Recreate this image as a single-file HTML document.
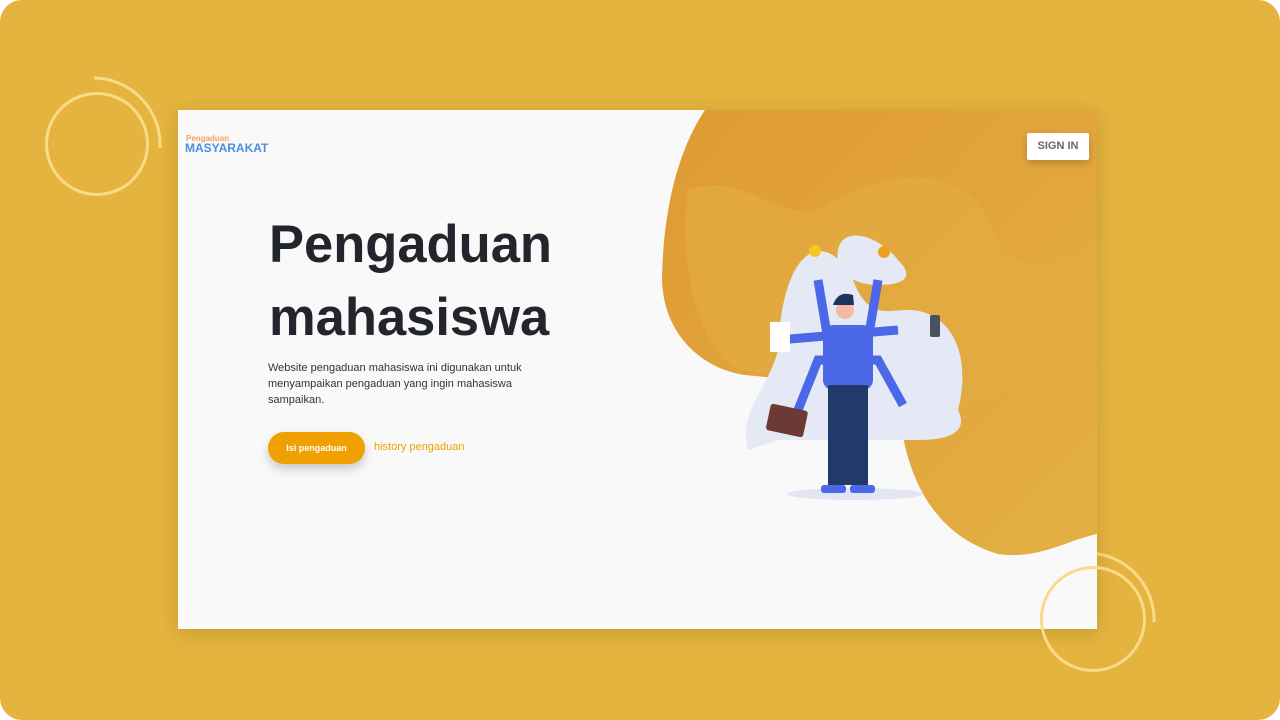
<!DOCTYPE html>
<html><head><style>
html,body{margin:0;background:#fff}
body{width:1280px;height:720px;overflow:hidden;font-family:"Liberation Sans",sans-serif;position:relative}
.bg{position:absolute;left:0;top:0;width:1280px;height:720px;background:#e5b43e;border-radius:22px}
.card{position:absolute;left:178px;top:110px;width:919px;height:519px;background:#f9f9f9;box-shadow:0 4px 18px rgba(0,0,0,.15);overflow:hidden}
.ring{position:absolute;border-radius:50%;border:3px solid #f9d98a}
</style></head><body>
<div class="bg"></div>
<div class="ring" style="left:45px;top:92px;width:98px;height:98px"></div>
<svg style="position:absolute;left:0;top:0" width="1280" height="720"><path d="M94 78 A67 67 0 0 1 160 148" fill="none" stroke="#f9d98a" stroke-width="3"/><path d="M1087 553 A67 67 0 0 1 1154 622" fill="none" stroke="#f9d98a" stroke-width="3"/></svg>
<div class="card">
<svg style="position:absolute;left:0;top:0" width="919" height="519">
<defs><linearGradient id="g" x1="0" y1="0" x2="1" y2="1"><stop offset="0" stop-color="#e09a33"/><stop offset="1" stop-color="#e3b043"/></linearGradient></defs>
<path d="M527 0 C500 40 485 100 484 170 C486 230 530 260 567 265 L720 280 C722 340 740 420 820 444 C860 450 890 430 919 424 L919 0 Z" fill="url(#g)"/>
<path d="M510 80 C560 60 600 110 640 100 C700 60 780 50 810 110 C830 170 870 160 919 130 L919 250 C850 270 800 300 760 290 L560 260 C520 240 500 150 510 80Z" fill="#e3ae45" opacity=".6"/>
<path d="M570 340 C560 300 590 280 600 240 C605 130 650 120 675 170 C690 210 710 200 730 200 C770 200 795 240 780 300 C790 320 775 330 740 330 L600 330 Z" fill="#e4e9f5"/>
<path d="M660 140 C665 115 700 125 720 150 C740 170 720 175 700 175 C680 175 655 165 660 140Z" fill="#e4e9f5"/>
<ellipse cx="677" cy="384" rx="68" ry="6" fill="#e2e6f2"/>
<circle cx="637" cy="141" r="6" fill="#f5c722"/><circle cx="706" cy="142" r="6" fill="#f0a020"/>
<path d="M640 170 L650 230 L690 230 L700 170" stroke="#4a68e8" stroke-width="9" fill="none"/>
<path d="M600 230 L720 220 M620 300 L640 250 L700 250 L725 295" stroke="#4a68e8" stroke-width="9" fill="none"/>
<rect x="645" y="215" width="50" height="65" rx="10" fill="#4a68e8"/>
<rect x="650" y="275" width="40" height="100" fill="#213a6a"/>
<circle cx="667" cy="200" r="9" fill="#f7b8a0"/><path d="M655 195 Q660 180 675 185 L676 195Z" fill="#1e3460"/>
<rect x="590" y="297" width="38" height="27" rx="3" fill="#6b3a35" transform="rotate(12 609 310)"/>
<rect x="752" y="205" width="10" height="22" rx="2" fill="#4a5060"/>
<rect x="592" y="212" width="20" height="30" fill="#fff"/>
<rect x="643" y="375" width="25" height="8" rx="3" fill="#4a68e8"/><rect x="672" y="375" width="25" height="8" rx="3" fill="#4a68e8"/>
</svg>
<div style="position:absolute;left:8px;top:24px;font-size:8px;font-weight:bold;color:#f5a35a">Pengaduan</div>
<div style="position:absolute;left:7px;top:31px;font-size:12px;font-weight:bold;color:#4a8fe0">MASYARAKAT</div>
<div style="position:absolute;left:849px;top:23px;width:62px;height:27px;background:#fff;box-shadow:0 3px 8px rgba(0,0,0,.2);border-radius:2px;font-size:11px;font-weight:bold;color:#666;text-align:center;line-height:27px">SIGN IN</div>
<div style="position:absolute;left:91px;top:98px;font-size:52.5px;font-weight:bold;color:#22252b;line-height:73px">Pengaduan<br>mahasiswa</div>
<div style="position:absolute;left:90px;top:250px;width:280px;font-size:11px;color:#333;line-height:16px">Website pengaduan mahasiswa ini digunakan untuk menyampaikan pengaduan yang ingin mahasiswa sampaikan.</div>
<div style="position:absolute;left:90px;top:322px;width:97px;height:32px;background:#f0a000;border-radius:16px;box-shadow:0 5px 10px rgba(0,0,0,.2);color:#fff;font-size:9px;font-weight:bold;text-align:center;line-height:32px">Isi pengaduan</div>
<div style="position:absolute;left:196px;top:331px;font-size:11px;color:#f0a000">history pengaduan</div>
</div>
<div class="ring" style="left:1040px;top:566px;width:100px;height:100px"></div>
</body></html>
